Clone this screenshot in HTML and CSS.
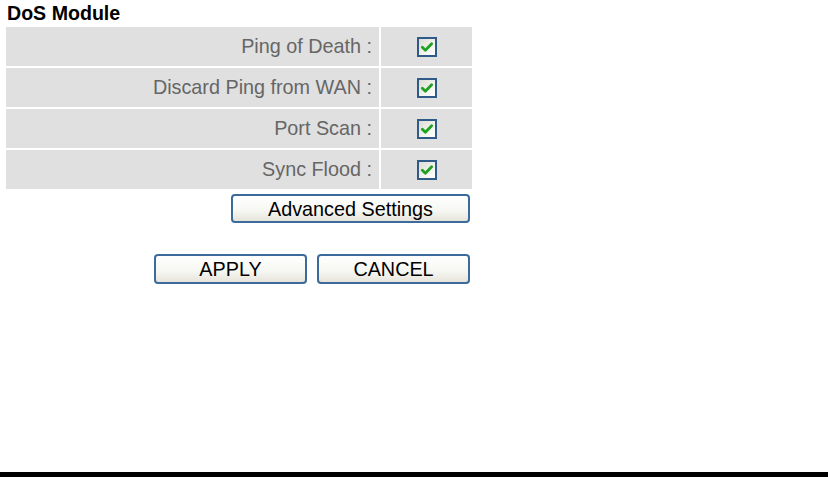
FILE: index.html
```html
<!DOCTYPE html>
<html>
<head>
<meta charset="utf-8">
<link rel="stylesheet" href="styles.css">
</head>
<body>
<div class="page">
  <div class="content">
    <div class="title">DoS Module</div>
    <table class="grid">
      <tr><td class="label">Ping of Death :</td><td class="check"><span class="cb"><svg viewBox="0 0 12 12" width="14" height="14"><path d="M2 6.2 L4.6 8.8 L10 3.2" fill="none" stroke="#21a121" stroke-width="2.4" stroke-linecap="round" stroke-linejoin="round"/></svg></span></td></tr>
      <tr><td class="label">Discard Ping from WAN :</td><td class="check"><span class="cb"><svg viewBox="0 0 12 12" width="14" height="14"><path d="M2 6.2 L4.6 8.8 L10 3.2" fill="none" stroke="#21a121" stroke-width="2.4" stroke-linecap="round" stroke-linejoin="round"/></svg></span></td></tr>
      <tr><td class="label">Port Scan :</td><td class="check"><span class="cb"><svg viewBox="0 0 12 12" width="14" height="14"><path d="M2 6.2 L4.6 8.8 L10 3.2" fill="none" stroke="#21a121" stroke-width="2.4" stroke-linecap="round" stroke-linejoin="round"/></svg></span></td></tr>
      <tr><td class="label">Sync Flood :</td><td class="check"><span class="cb"><svg viewBox="0 0 12 12" width="14" height="14"><path d="M2 6.2 L4.6 8.8 L10 3.2" fill="none" stroke="#21a121" stroke-width="2.4" stroke-linecap="round" stroke-linejoin="round"/></svg></span></td></tr>
    </table>
    <div class="adv-row"><button class="btn btn-adv">Advanced Settings</button></div>
    <div class="action-row"><button class="btn btn-act">APPLY</button><button class="btn btn-act">CANCEL</button></div>
  </div>
  <div class="bottom-bar"></div>
</div>
</body>
</html>
```
FILE: styles.css
```css
html, body {
  margin: 0;
  padding: 0;
  background: #fff;
}
.page {
  display: flex;
  flex-direction: column;
  height: 100vh;
  font-family: "Liberation Sans", Arial, sans-serif;
}
.content {
  padding: 2px 0 0 4px;
  width: 470px;
}
.title {
  font-weight: bold;
  font-size: 19.6px;
  line-height: 23px;
  color: #000;
  padding-left: 3px;
}
.grid {
  border-collapse: separate;
  border-spacing: 2px;
  width: 470px;
}
.grid td {
  background: #e0e0e0;
  height: 39px;
  padding: 0;
}
.label {
  width: 373px;
  text-align: right;
  padding-right: 7px !important;
  font-size: 19.8px;
  color: #666;
  box-sizing: border-box;
}
.check {
  text-align: center;
  width: 91px;
}
.cb {
  display: inline-flex;
  align-items: center;
  justify-content: center;
  width: 16px;
  height: 16px;
  border: 2px solid #2e5b88;
  background: linear-gradient(135deg, #dcdcd4 0%, #f4f4f0 60%, #ffffff 100%);
  vertical-align: middle;
  margin-top: 1px;
}
.cb svg { display: block; }
.adv-row {
  display: flex;
  justify-content: flex-end;
  padding: 3px 4px 0 0;
}
.action-row {
  display: flex;
  justify-content: flex-end;
  gap: 10px;
  padding: 31px 4px 0 0;
}
.btn {
  font-family: "Liberation Sans", Arial, sans-serif;
  font-size: 19.8px;
  color: #000;
  border: 2px solid #3b6a9b;
  border-radius: 4px;
  background: linear-gradient(180deg, #ffffff 0%, #f6f6f2 60%, #e6e4da 100%);
  padding: 0;
  margin: 0;
  box-sizing: border-box;
  line-height: 24px;
}
.btn-adv {
  width: 239px;
  height: 29px;
}
.btn-act {
  width: 153px;
  height: 30px;
}
.bottom-bar {
  margin-top: auto;
  height: 5px;
  background: #000;
}
```
